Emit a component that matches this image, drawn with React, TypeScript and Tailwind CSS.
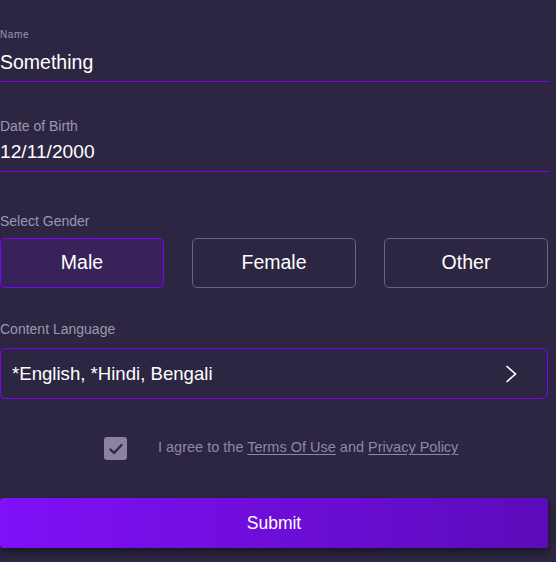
import React from 'react';

const genders = ['Male', 'Female', 'Other'];

export default function App() {
  const selected = 'Male';

  return (
    <div className="w-[556px] h-[562px] bg-[#2c2642] font-[Liberation_Sans,Arial,sans-serif] overflow-hidden">
      <div className="w-[549px] pt-[29px]">
        {/* Name */}
        <div className="text-[10px] leading-[12px] tracking-[0.06em] text-[#9d98ae]">Name</div>
        <div className="mt-[9px] text-[19.5px] leading-[24px] text-white">Something</div>
        <div className="mt-[7px] h-px bg-[#8000ff]" />

        {/* Date of birth */}
        <div className="mt-[36px] text-[14px] leading-[16px] text-[#9d98ae]">Date of Birth</div>
        <div className="mt-[6px] text-[19.2px] leading-[24px] text-white">12/11/2000</div>
        <div className="mt-[7px] h-px bg-[#8000ff]" />

        {/* Gender */}
        <div className="mt-[41px] text-[14px] leading-[16px] text-[#9d98ae]">Select Gender</div>
        <div className="mt-[9px] grid grid-cols-3 gap-[28px] pr-px">
          {genders.map((g) => (
            <button
              key={g}
              className={
                g === selected
                  ? 'h-[50px] rounded-[5px] border border-[#8000ff] bg-[#38225a] text-[19.5px] text-white'
                  : 'h-[50px] rounded-[5px] border border-[#6b6680] bg-transparent text-[19.5px] text-white'
              }
            >
              {g}
            </button>
          ))}
        </div>

        {/* Content language */}
        <div className="mt-[33px] text-[14px] leading-[16px] text-[#9d98ae]">Content Language</div>
        <div className="mt-[11px] mr-px h-[51px] rounded-[6px] border border-[#8000ff] flex items-center justify-between pl-[11px] pr-[30px]">
          <span className="text-[18.6px] text-white">*English, *Hindi, Bengali</span>
          <svg width="12" height="18" viewBox="0 0 12 18" fill="none">
            <polyline points="1.5,1 10.5,9 1.5,17" stroke="#ffffff" strokeWidth="1.6" />
          </svg>
        </div>

        {/* Agreement */}
        <div className="mt-[38px] flex items-center pl-[104px] gap-[31px]">
          <div className="w-[23px] h-[23px] rounded-[3px] bg-[#8a829f] flex items-center justify-center">
            <svg width="16" height="16" viewBox="0 0 16 16" fill="none">
              <polyline points="2.5,8.5 6,12 13.5,4" stroke="#2c2642" strokeWidth="2.2" strokeLinecap="round" strokeLinejoin="round" />
            </svg>
          </div>
          <p className="-mt-px text-[14.5px] text-[#8e89a3]">
            I agree to the <span className="underline underline-offset-2">Terms Of Use</span> and{' '}
            <span className="underline underline-offset-2">Privacy Policy</span>
          </p>
        </div>

        {/* Submit */}
        <button className="mt-[38px] mr-px w-[548px] h-[50px] rounded-[4px] bg-linear-to-r from-[#8010f8] to-[#5c0bbb] shadow-[0_4px_8px_rgba(0,0,0,0.45)] text-[17.5px] text-white">
          Submit
        </button>
      </div>
    </div>
  );
}
